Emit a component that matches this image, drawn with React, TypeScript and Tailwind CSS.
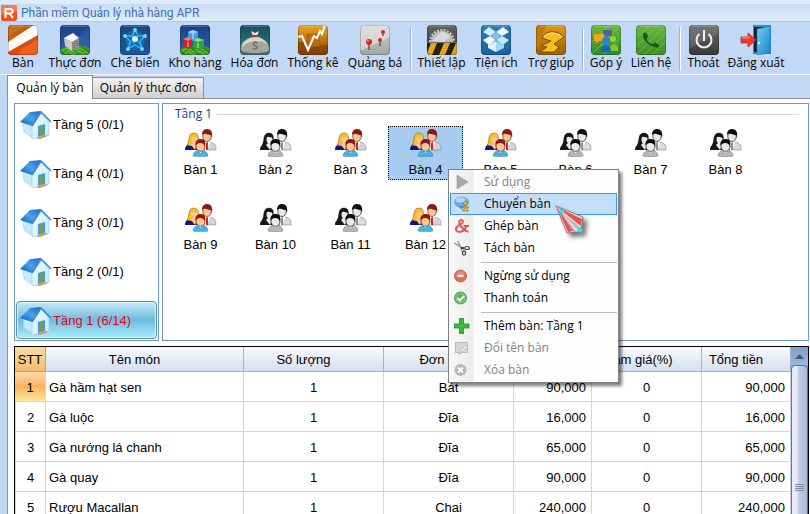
import { ReactNode } from "react";

const UI_FONT = "font-['Open_Sans','Noto_Sans',sans-serif]";
const GRID_FONT = "font-['Liberation_Sans',Arial,sans-serif]";

/* ---------- toolbar icons ---------- */

function IconFrame({ id, from, to, children }: { id: string; from: string; to: string; children: ReactNode }) {
  return (
    <svg width="30" height="30" viewBox="0 0 30 30" aria-hidden="true">
      <defs>
        <linearGradient id={`bg-${id}`} x1="0" y1="0" x2="0" y2="1">
          <stop offset="0" stopColor={from} />
          <stop offset="1" stopColor={to} />
        </linearGradient>
        <clipPath id={`clip-${id}`}>
          <rect width="30" height="30" rx="4" />
        </clipPath>
      </defs>
      <g clipPath={`url(#clip-${id})`}>
        <rect width="30" height="30" fill={`url(#bg-${id})`} />
        {children}
      </g>
      <rect x=".5" y=".5" width="29" height="29" rx="3.5" fill="none" stroke="#000" strokeOpacity=".2" />
      <path d="M3 1h24" stroke="#fff" strokeOpacity=".35" />
    </svg>
  );
}

const Grass = () => (
  <>
    <path d="M0 24L8 21H23L30 23V30H0Z" fill="#3c9a22" />
    <path d="M0 27l7-4 6 4 7-4 8 5M4 30l4-4 5 4 6-4 6 4" stroke="#6ccb3c" fill="none" />
    <path d="M0 25l5 5M12 22l6 8M22 22l7 5" stroke="#1f6d18" fill="none" />
  </>
);

const TableIcon = () => (
  <IconFrame id="table" from="#b86114" to="#ef5a10">
    <path d="M0 0H18L0 12Z" fill="#c8701c" />
    <path d="M0 27L30 10V30H0Z" fill="#f0601a" />
    <path d="M0 30V27L30 10V14L14 24L10 30Z" fill="#dd4a0e" />
    <path d="M0 17L26 0H30V10L0 27Z" fill="#fdf9f4" />
  </IconFrame>
);

const MenuIcon = () => (
  <IconFrame id="menu" from="#1c3f86" to="#2c63ae">
    <path d="M0 30L30 0V30Z" fill="#3b76c0" opacity=".3" />
    <Grass />
    <path d="M4 13L13 8L19 13L12 17Z" fill="#fafafa" />
    <path d="M4 13L12 17V26L5 21Z" fill="#c9c9c4" />
    <path d="M12 17L19 13V23L12 26Z" fill="#91928d" />
    <path d="M14 18v6M17 16v6" stroke="#4e4f4b" strokeDasharray="1 1" />
  </IconFrame>
);

const CookIcon = () => (
  <IconFrame id="cook" from="#1d4580" to="#1c559c">
    <circle cx="15" cy="15" r="10" fill="#1a86cf" opacity=".45" />
    <g fill="none" stroke="#37b8f0" strokeWidth="1.2">
      <path d="M15 5L18 11L25 11L20 16L22 24L15 20L8 24L10 16L5 11L12 11Z" />
      <path d="M5 11Q16 8 22 24M25 11Q14 8 8 24M15 5Q11 14 15 20" opacity=".7" />
    </g>
    <g fill="#5fdcff">
      <circle cx="15" cy="5" r="2" />
      <circle cx="5" cy="11" r="2" />
      <circle cx="25" cy="11" r="2" />
      <circle cx="8" cy="24" r="2" />
      <circle cx="22" cy="24" r="2" />
    </g>
    <circle cx="15" cy="14" r="3" fill="#c9f6ff" />
  </IconFrame>
);

const StockIcon = () => (
  <IconFrame id="stock" from="#1c3f86" to="#2c63ae">
    <Grass />
    <path d="M8 7L13 5L18 7V14L13 16L8 14Z" fill="#3f9be8" />
    <path d="M8 7L13 5L18 7L13 9Z" fill="#9dd3fa" />
    <path d="M3 14L8 12L12 14V22L8 24L3 22Z" fill="#d21f24" />
    <path d="M3 14L8 12L12 14L8 16Z" fill="#f1797a" />
    <path d="M13 15L18 13L24 15V22L18 25L13 22Z" fill="#2aa33a" />
    <path d="M13 15L18 13L24 15L18 17Z" fill="#88df7c" />
    <path d="M13 9v5M8 17v5M18 18v5" stroke="#fff" strokeOpacity=".8" />
  </IconFrame>
);

const BillIcon = () => (
  <IconFrame id="bill" from="#14505c" to="#3d7b7c">
    <path d="M11 6L15 8L19 6L17 11H13Z" fill="#e9e4dc" />
    <path d="M12 11H18" stroke="#c22c2c" strokeWidth="2" />
    <path d="M12 12C4 14 0 19 1 25C2 29 28 29 29 25C30 19 25 14 18 12Z" fill="#a9a59c" />
    <path d="M11 13C5 15 2 19 2 22C8 15 20 14 27 19C25 15 21 13 18 12Z" fill="#d8d5cd" />
    <path d="M17 18c-2-2-5 0-3 2s4 1 3 3-4 1-4 0" fill="none" stroke="#6b675e" strokeWidth="1.2" />
  </IconFrame>
);

const StatsIcon = () => (
  <IconFrame id="stats" from="#f2a11d" to="#8a4708">
    <path d="M0 17H12L17 20H30V30H0Z" fill="#7c3c06" opacity=".6" />
    <path d="M10 10h10v10H10z" fill="none" stroke="#b8640d" strokeWidth="3" />
    <path d="M0 12L4 11L10 25L16 11L19 13L22 6L24 9L27 0" fill="none" stroke="#fff" strokeWidth="2" />
  </IconFrame>
);

const PromoIcon = () => (
  <IconFrame id="promo" from="#d4d4d4" to="#a3a3a3">
    <path d="M0 0H30V12L0 26Z" fill="#e3e3e3" opacity=".7" />
    <path d="M9 18v7M20 17v4M23 8v3" stroke="#565656" strokeWidth="1.4" />
    <circle cx="9" cy="17" r="3" fill="#d5281e" />
    <circle cx="20" cy="15" r="2" fill="#d5281e" />
    <circle cx="23" cy="7" r="2" fill="#d5281e" />
    <circle cx="8" cy="16" r="1" fill="#ff9a8c" />
  </IconFrame>
);

const SetupIcon = () => (
  <IconFrame id="setup" from="#626262" to="#3c3c3c">
    <circle cx="15" cy="17" r="12" fill="none" stroke="#d2d2d2" strokeWidth="2" strokeDasharray="2 1.4" />
    <circle cx="15" cy="17" r="11" fill="#bdbdbd" />
    <path d="M5 16L15 6L24 11L17 17Z" fill="#d8d8d8" />
    <rect y="17" width="30" height="13" fill="#232323" />
    <path d="M4 18H10L5 30H0V28ZM17 18H23L18 30H12ZM29 18H30V30H24Z" fill="#eaa61b" />
    <path d="M0 17.5H30" stroke="#6b6b6b" />
  </IconFrame>
);

const ToolsIcon = () => (
  <IconFrame id="tools" from="#2f7cb2" to="#1d5f9a">
    <path d="M8 2L15 7L9 11L2 7Z" fill="#cdeffb" />
    <path d="M22 2L28 7L21 11L15 7Z" fill="#eefaff" />
    <path d="M2 15L9 11L15 15L8 20Z" fill="#eefaff" />
    <path d="M21 11L28 15L22 20L15 15Z" fill="#c3e8f8" />
    <path d="M9 11L15 7L21 11L15 15Z" fill="#7dc0e2" />
    <path d="M7 20L15 16V27L7 23Z" fill="#dcf3fc" />
    <path d="M15 16L23 20V23L15 27Z" fill="#a5d9f1" />
  </IconFrame>
);

const HelpIcon = () => (
  <IconFrame id="help" from="#e8960f" to="#9a6006">
    <path d="M0 0H10L3 20L0 22Z" fill="#c47908" />
    <path
      d="M6 13C9 6 20 4 28 12L18 19L23 22L18 27H4L11 22L5 21L15 16Z"
      fill="#f3c01b"
      stroke="#6f4403"
      strokeWidth=".9"
    />
    <path d="M8 12C12 7 20 7 25 11" fill="none" stroke="#ffe984" />
  </IconFrame>
);

const FeedbackIcon = () => (
  <IconFrame id="feedback" from="#6cb83a" to="#2f8a2a">
    <path d="M0 30L30 0M-6 24L24-6M6 36L36 6" stroke="#8ed05a" strokeOpacity=".6" />
    <path d="M12 5H21V11H17L15 13V11H12Z" fill="#5e5aa4" />
    <circle cx="22" cy="14" r="3" fill="#97d830" />
    <path d="M18 26C18 18 27 17 27 23V26Z" fill="#84c926" />
    <path d="M3 9H13V16H8L5 19V16H3Z" fill="#f7a21b" />
    <circle cx="15" cy="16" r="4" fill="#2a86dc" />
    <path d="M10 27C10 18 20 18 20 27Z" fill="#1767c0" />
  </IconFrame>
);

const ContactIcon = () => (
  <IconFrame id="contact" from="#6ab83e" to="#3c8f2a">
    <path d="M0 30L30 0M-8 22L22-8M8 38L38 8M-4 26L26-4M4 34L34 4" stroke="#8ccd5a" strokeOpacity=".5" />
    <path
      d="M7 9C8 7 10 7 11 9L12 11C12 13 10 13 11 15C12 17 14 19 16 19C18 19 18 17 20 18L23 20C23 22 22 23 19 22C13 21 6 15 7 9Z"
      fill="#1e571a"
    />
  </IconFrame>
);

const ExitIcon = () => (
  <IconFrame id="exit" from="#6a6a6a" to="#383838">
    <path d="M0 0H30V8L0 24Z" fill="#8a8a8a" opacity=".35" />
    <path d="M10.500 9A7.500 7.500 0 1 0 19.500 9" fill="none" stroke="#f2f2f2" strokeWidth="2" />
    <path d="M15 5V16" stroke="#f2f2f2" strokeWidth="2" />
  </IconFrame>
);

const LogoutIcon = () => (
  <svg width="32" height="30" viewBox="0 0 32 30" aria-hidden="true">
    <defs>
      <linearGradient id="door" x1="0" y1="0" x2="1" y2="1">
        <stop offset="0" stopColor="#7ccdf6" />
        <stop offset="1" stopColor="#1584cc" />
      </linearGradient>
    </defs>
    <path d="M13 0H31V29H13Z" fill="#2a8fd0" />
    <path d="M14 2H24V27H14Z" fill="#0e2438" />
    <path d="M17 4L30 1V28L17 30Z" fill="url(#door)" stroke="#2577b0" strokeWidth=".6" />
    <circle cx="19" cy="18" r="1.200" fill="#e9f7ff" />
    <path d="M1 12H8V8L16 15L8 22V18H1Z" fill="#ec3b30" stroke="#b81d18" strokeWidth=".7" />
    <path d="M2 13H9V11" fill="none" stroke="#ff9d92" />
  </svg>
);

/* ---------- content icons ---------- */

const AppLogo = () => (
  <svg width="16" height="16" viewBox="0 0 16 16" aria-hidden="true">
    <rect width="16" height="16" rx="2" fill="#f0501c" />
    <path d="M2 0H14A2 2 0 0 1 16 2V6L0 10V2A2 2 0 0 1 2 0Z" fill="#f67c48" />
    <path d="M4.500 13V4H9C12.500 4 12.500 8.500 9 8.500H5M8.500 8.500L12 13" fill="none" stroke="#fff" strokeWidth="2" />
  </svg>
);

const HouseIcon = () => (
  <svg width="32" height="30" viewBox="0 0 32 30" aria-hidden="true">
    <defs>
      <linearGradient id="roof" x1="1" y1="0" x2="0" y2="1">
        <stop offset="0" stopColor="#1a66c0" />
        <stop offset=".5" stopColor="#4aa2f0" />
        <stop offset="1" stopColor="#0e57b4" />
      </linearGradient>
      <linearGradient id="wall" x1="0" y1="0" x2="1" y2="1">
        <stop offset="0" stopColor="#f2fdff" />
        <stop offset="1" stopColor="#bfe9fb" />
      </linearGradient>
    </defs>
    <path d="M3 12L13 15V28L4 22Z" fill="#c2ecfb" stroke="#a9c3d6" strokeWidth=".6" />
    <path d="M12 15L21 3L29 12V25L15 29L12 28Z" fill="url(#wall)" stroke="#a9c3d6" strokeWidth=".6" />
    <path d="M0 12L10 2L21 1L12 16Z" fill="url(#roof)" />
    <path d="M12 16L21 2L31 12" fill="none" stroke="#3d86d2" strokeWidth="1.600" />
    <path d="M18 16L25 14V25L18 27Z" fill="#3f9ae6" />
    <path d="M20 17L23 16V25L20 26Z" fill="#7f9a4a" />
    <path d="M16 28L25 25L28 26L20 29Z" fill="#d9906c" />
  </svg>
);

function PeopleIcon({ busy }: { busy: boolean }) {
  const c = busy
    ? { skin: "#fbc78f", blonde: "#f7bf1e", hair: "#8c1a12", woman: "#12128e", man: "#cfd2e0", tie: "#e01e1e", kid: "#39b5f2", edge: "#5b2c14" }
    : { skin: "#e9e9e9", blonde: "#161616", hair: "#0d0d0d", woman: "#161616", man: "#dcdcdc", tie: "#8d8d8d", kid: "#b5b5b5", edge: "#1b1b1b" };
  return (
    <svg width="32" height="28" viewBox="0 0 32 28" aria-hidden="true">
      <path d="M16 21C16 15 19 13 23 13C28 13 31 15 31 19V21Z" fill={c.man} stroke={c.edge} strokeOpacity=".5" strokeWidth=".6" />
      <path d="M19 13L24 11L25 14L22 21H20Z" fill="#fff" />
      <path d="M21 14L23 13L23 21H21Z" fill={c.tie} />
      <ellipse cx="22" cy="7.500" rx="4.200" ry="5" fill={c.skin} stroke={c.edge} strokeWidth=".7" />
      <path d="M17 6C17 2 19 0 22 0C26 0 28 3 27 9L26 6C23 6 20 3 17 6Z" fill={c.hair} />
      <path d="M0 21C0 16 3 15 7 15C11 15 13 17 13 20V21Z" fill={c.woman} />
      <path d="M2 16C5 13 2 4 9 4C14 4 14 9 13 14L10 17H5Z" fill={c.blonde} stroke={c.edge} strokeWidth=".4" />
      <path d="M6 16L10 21L12 16L9 13Z" fill={c.skin} />
      <ellipse cx="9.500" cy="10.500" rx="3" ry="4" fill={c.skin} />
      <path d="M5 11C6 6 10 8 13 9L13 7L10 5L6 7Z" fill={c.blonde} />
      <path d="M8 27C8 23 12 21 15 21C19 21 23 23 23 27L21 27.500H10Z" fill={c.kid} stroke={c.edge} strokeOpacity=".5" strokeWidth=".5" />
      <path d="M13 21L15.500 24L18 21Z" fill="#fff" />
      <ellipse cx="15.500" cy="17.500" rx="4.500" ry="4.800" fill={c.skin} stroke={c.edge} strokeWidth=".7" />
      <path d="M10.500 17C10 12 12 10 16 10C20 10 21 13 20 18C19 15 18 14 15 14C13 14 11 15 10.500 17Z" fill={c.hair} />
    </svg>
  );
}

const menuIcons = {
  play: <path d="M3 1L14 8L3 15Z" fill="#a9a9a9" stroke="#989898" strokeWidth=".6" />,
  move: (
    <>
      <ellipse cx="7.500" cy="6" rx="7.500" ry="5.500" fill="#68a9ee" />
      <ellipse cx="6.500" cy="4" rx="5" ry="2.500" fill="#b4d7fb" />
      <path d="M4 10L9 10L8 14Z" fill="#4b8fdc" />
      <circle cx="11.500" cy="7.500" r="2" fill="#f5c02f" stroke="#8d6510" strokeWidth=".7" />
      <path d="M8 11L15 11L12.800 12.500L14.500 15H8.500L10.500 12.500Z" fill="#f5c02f" stroke="#8d6510" strokeWidth=".7" />
    </>
  ),
  merge: (
    <path
      d="M14.500 14C10 13 4 6 5.500 3C7 0.500 10.500 3 8 5.500C4 8 1 9 2 12C4 15.500 11 14 12 8M9.500 8H15"
      fill="none"
      stroke="#dc5a5c"
      strokeWidth="2"
    />
  ),
  split: (
    <>
      <path d="M0 3L10 9M4 1L8 11" stroke="#9b9b9b" strokeWidth="1.500" />
      <path d="M7 8L10 8" stroke="#444" strokeWidth="2" />
      <ellipse cx="13" cy="8" rx="2.300" ry="1.500" fill="none" stroke="#4a4a4a" strokeWidth="1.200" />
      <ellipse cx="10" cy="13" rx="1.500" ry="2.200" fill="none" stroke="#4a4a4a" strokeWidth="1.200" />
    </>
  ),
  stop: (
    <>
      <circle cx="6.500" cy="8" r="6" fill="#e2675c" stroke="#c65047" strokeWidth=".8" />
      <path d="M2 7C3 2 10 2 11 7Z" fill="#f3938a" opacity=".7" />
      <path d="M3.500 8H9.500" stroke="#fff" strokeWidth="2.200" />
    </>
  ),
  pay: (
    <>
      <circle cx="6.500" cy="8" r="6" fill="#5ab256" stroke="#3f9544" strokeWidth=".8" />
      <circle cx="6.500" cy="8" r="4.600" fill="none" stroke="#a5dc9d" strokeWidth=".8" />
      <path d="M3.500 8L6 10.500L10 6" fill="none" stroke="#fff" strokeWidth="2" />
    </>
  ),
  add: (
    <path d="M5.500 .5H9.500V6H15V10H9.500V15.500H5.500V10H0V6H5.500Z" fill="#3cb83c" stroke="#1d8f25" strokeWidth=".8" />
  ),
  rename: (
    <>
      <path d="M1.500 2.500H13.500V12.500H8L5 14.500V12.500H1.500Z" fill="#d6d6d6" stroke="#b8b8b8" />
      <path d="M6 11L12 5L14 7L8 12Z" fill="#eee" stroke="#b0b0b0" strokeWidth=".6" />
    </>
  ),
  remove: (
    <>
      <circle cx="6.500" cy="8" r="6" fill="#b6b6b6" />
      <path d="M4 5.500L9 10.500M9 5.500L4 10.500" stroke="#fff" strokeWidth="2" />
    </>
  ),
};

/* ---------- data ---------- */

type Tool = { label: string; icon: ReactNode; width: string };

const toolGroups: Tool[][] = [
  [
    { label: "Bàn", icon: <TableIcon />, width: "w-[42px]" },
    { label: "Thực đơn", icon: <MenuIcon />, width: "w-[62px]" },
    { label: "Chế biến", icon: <CookIcon />, width: "w-[58px]" },
    { label: "Kho hàng", icon: <StockIcon />, width: "w-[62px]" },
    { label: "Hóa đơn", icon: <BillIcon />, width: "w-[57px]" },
    { label: "Thống kê", icon: <StatsIcon />, width: "w-[60px]" },
    { label: "Quảng bá", icon: <PromoIcon />, width: "w-[64px]" },
  ],
  [
    { label: "Thiết lập", icon: <SetupIcon />, width: "w-[55px]" },
    { label: "Tiện ích", icon: <ToolsIcon />, width: "w-[54px]" },
    { label: "Trợ giúp", icon: <HelpIcon />, width: "w-[56px]" },
  ],
  [
    { label: "Góp ý", icon: <FeedbackIcon />, width: "w-[40px]" },
    { label: "Liên hệ", icon: <ContactIcon />, width: "w-[50px]" },
  ],
  [
    { label: "Thoát", icon: <ExitIcon />, width: "w-[41px]" },
    { label: "Đăng xuất", icon: <LogoutIcon />, width: "w-[64px]" },
  ],
];

const floors = [
  { name: "Tầng 5", used: "(0/1)" },
  { name: "Tầng 4", used: "(0/1)" },
  { name: "Tầng 3", used: "(0/1)" },
  { name: "Tầng 2", used: "(0/1)" },
  { name: "Tầng 1", used: "(6/14)", active: true },
];

const busyTables = [1, 3, 4, 5, 9, 12];
const tables = Array.from({ length: 12 }, (_, i) => i + 1);

type MenuEntry = { label: string; icon: keyof typeof menuIcons; disabled?: boolean; active?: boolean };

const menuGroups: MenuEntry[][] = [
  [
    { label: "Sử dụng", icon: "play", disabled: true },
    { label: "Chuyển bàn", icon: "move", active: true },
    { label: "Ghép bàn", icon: "merge" },
    { label: "Tách bàn", icon: "split" },
  ],
  [
    { label: "Ngừng sử dụng", icon: "stop" },
    { label: "Thanh toán", icon: "pay" },
  ],
  [
    { label: "Thêm bàn: Tầng 1", icon: "add" },
    { label: "Đổi tên bàn", icon: "rename", disabled: true },
    { label: "Xóa bàn", icon: "remove", disabled: true },
  ],
];

const orders = [
  ["Gà hầm hạt sen", "1", "Bát", "90,000", "0", "90,000"],
  ["Gà luộc", "1", "Đĩa", "16,000", "0", "16,000"],
  ["Gà nướng lá chanh", "1", "Đĩa", "65,000", "0", "65,000"],
  ["Gà quay", "1", "Đĩa", "90,000", "0", "90,000"],
  ["Rượu Macallan", "1", "Chai", "240,000", "0", "240,000"],
];

/* ---------- sections ---------- */

function TitleBar() {
  return (
    <header className="flex h-[22px] shrink-0 items-center gap-1 border-t-4 border-b border-t-[#deebf9] border-b-[#a8cdf0] bg-linear-to-b from-[#cadcf4] to-[#e0edfc] pl-px">
      <AppLogo />
      <h1 className="font-[Roboto,sans-serif] text-[12px] leading-4 text-[#4070b8]">Phần mềm Quản lý nhà hàng APR</h1>
    </header>
  );
}

function Toolbar() {
  return (
    <nav className="flex h-[53px] shrink-0 border-b border-[#f4f8fe] pl-[2px]">
      {toolGroups.map((group, i) => (
        <div key={i} className="flex">
          {i > 0 && (
            <div className="flex w-[7px] justify-center pt-[5px] pb-[3px]">
              <div className="w-[2px] border-l border-[#9fb3d0] bg-white" />
            </div>
          )}
          {group.map((tool) => (
            <button key={tool.label} type="button" className={`flex flex-col items-center pt-[3px] ${tool.width}`}>
              {tool.icon}
              <span className="text-[12px] leading-4 whitespace-nowrap">{tool.label}</span>
            </button>
          ))}
        </div>
      ))}
    </nav>
  );
}

function Tabs() {
  return (
    <div role="tablist" className="ml-[7px] flex h-6 shrink-0 items-end border-b border-[#8c93a3]">
      <button
        type="button"
        role="tab"
        aria-selected="true"
        className="-mb-px h-6 w-[86px] border border-b-0 border-[#8c8e94] bg-white text-[12px] leading-5 whitespace-nowrap"
      >
        Quản lý bàn
      </button>
      <button
        type="button"
        role="tab"
        aria-selected="false"
        className="h-[21px] w-[111px] border border-b-0 border-l-0 border-[#8c8e94] bg-linear-to-b from-[#f2f2f2] to-[#d0d0d0] text-[12px] leading-5 whitespace-nowrap"
      >
        Quản lý thực đơn
      </button>
    </div>
  );
}

function FloorList() {
  return (
    <ul className={`flex w-[145px] shrink-0 flex-col gap-[11px] border border-[#6f9dcb] px-px pt-px text-[13px] ${GRID_FONT}`}>
      {floors.map((floor) => (
        <li key={floor.name}>
          <button
            type="button"
            className={`flex h-[38px] w-full items-center gap-px rounded-sm border pt-[2px] pl-[3px] ${
              floor.active
                ? "border-[#5e8fb0] bg-linear-to-b from-[#c4e9f6] via-[#6cbce2] to-[#a8effa] text-[#f00010] inset-ring inset-ring-[#d4f2fb]"
                : "border-transparent"
            }`}
          >
            <HouseIcon />
            <span className="whitespace-nowrap">
              {floor.name} {floor.used}
            </span>
          </button>
        </li>
      ))}
    </ul>
  );
}

function TableGroup() {
  return (
    <section className="min-w-0 flex-1 border border-[#6b97d0]">
      <div className="flex h-[22px] items-center gap-1 pr-[9px] pb-[2px] pl-3">
        <h2 className="text-[12px] leading-4 whitespace-nowrap text-[#143c9c]">Tầng 1</h2>
        <div className="h-px flex-1 bg-[#d6dcec]" />
      </div>
      <div className={`flex flex-wrap gap-y-[21px] text-[13px] leading-4 ${GRID_FONT}`}>
        {tables.map((n) => (
          <button
            key={n}
            type="button"
            className={`flex h-[54px] w-[75px] flex-col items-center gap-[5px] border border-dotted pt-[2px] ${
              n === 4 ? "border-black bg-[#a7ccef]" : "border-transparent"
            }`}
          >
            <PeopleIcon busy={busyTables.includes(n)} />
            <span>Bàn {n}</span>
          </button>
        ))}
      </div>
    </section>
  );
}

const headCell = "border-r border-b border-[#9db4d2] bg-linear-to-b from-[#f8fafd] to-[#d5dfee] pt-px pr-5 font-normal";
const cell = "border-r border-b border-[#d0d5e2] pt-[2px]";

function OrderTable() {
  return (
    <section className={`flex min-h-0 flex-1 overflow-hidden border border-b-0 border-black text-[13px] leading-4 ${GRID_FONT}`}>
      <table className="h-max flex-1 table-fixed border-separate border-spacing-0">
        <colgroup>
          <col className="w-[31px]" />
          <col />
          <col className="w-[140px]" />
          <col className="w-[130px]" />
          <col className="w-[78px]" />
          <col className="w-[110px]" />
          <col className="w-[89px]" />
        </colgroup>
        <thead>
          <tr className="h-[25px]">
            <th className="border-r border-b border-[#f09436] bg-linear-to-b from-[#f9dca0] to-[#f0be6c] pt-px font-normal">STT</th>
            <th className={headCell}>Tên món</th>
            <th className={headCell}>Số lượng</th>
            <th className={headCell}>Đơn vị</th>
            <th className={headCell}>Đơn giá</th>
            <th className={headCell}>Giảm giá(%)</th>
            <th className={headCell}>Tổng tiền</th>
          </tr>
        </thead>
        <tbody>
          {orders.map(([name, qty, unit, price, discount, total], i) => (
            <tr key={name} className="h-[30px]">
              <td
                className={`text-center ${cell} ${
                  i === 0 ? "bg-linear-to-b from-[#fbdcae] via-[#fbb25a] to-[#fdea9c]" : "border-l"
                }`}
              >
                {i + 1}
              </td>
              <td className={`pl-[3px] ${cell}`}>{name}</td>
              <td className={`text-center ${cell}`}>{qty}</td>
              <td className={`text-center ${cell}`}>{unit}</td>
              <td className={`pr-[5px] text-right ${cell}`}>{price}</td>
              <td className={`text-center ${cell}`}>{discount}</td>
              <td className={`pr-[5px] text-right ${cell}`}>{total}</td>
            </tr>
          ))}
        </tbody>
      </table>
      <div className="flex w-[17px] shrink-0 flex-col bg-[#86a5ce]">
        <button
          type="button"
          aria-label="Cuộn lên"
          className="flex h-[18px] shrink-0 items-center justify-center bg-linear-to-b from-[#7f9fca] to-[#9ab8dc]"
        >
          <svg width="9" height="5" viewBox="0 0 9 5" aria-hidden="true">
            <path d="M4.500 0L9 5H0Z" fill="#44597c" />
          </svg>
        </button>
        <div className="flex h-[244px] shrink-0 flex-col items-center justify-center gap-px rounded-sm border border-[#5674a6] bg-linear-to-r from-[#e6ebf5] from-35% via-[#c4d1e5] via-40% to-[#a4bcdc]">
          <span className="h-px w-[9px] bg-[#7d8ca4]" />
          <span className="h-px w-[9px] bg-[#7d8ca4]" />
          <span className="h-px w-[9px] bg-[#7d8ca4]" />
          <span className="h-px w-[9px] bg-[#7d8ca4]" />
        </div>
      </div>
    </section>
  );
}

function ContextMenu() {
  return (
    <div
      role="menu"
      className="absolute top-[169px] left-[448px] w-[171px] border border-[#808080] bg-linear-to-r from-[#f8f8f8] from-0% via-[#ececec] via-[24px] to-[#fdfdfd] to-[25px] p-px shadow-[3px_3px_3px_rgba(0,0,0,0.5)]"
    >
      {menuGroups.map((group, i) => (
        <div key={i}>
          {i > 0 && (
            <div className="flex h-[6px] items-center pl-[31px]">
              <div className="h-px flex-1 bg-[#bdbdbd]" />
            </div>
          )}
          {group.map((entry) => (
            <button
              key={entry.label}
              type="button"
              role="menuitem"
              disabled={entry.disabled}
              className={`flex h-[22px] w-full items-center gap-[14px] border pl-[3px] text-[12px] leading-4 whitespace-nowrap ${
                entry.active ? "border-[#3399ff] bg-[#c3dffd]" : "border-transparent"
              } ${entry.disabled ? "text-[#838383]" : "text-black"}`}
            >
              <svg width="16" height="16" viewBox="0 0 16 16" aria-hidden="true">
                {menuIcons[entry.icon]}
              </svg>
              {entry.label}
            </button>
          ))}
        </div>
      ))}
    </div>
  );
}

function Pointer() {
  return (
    <svg
      className="pointer-events-none absolute top-[205px] left-[555px] drop-shadow-[4px_4px_2px_rgba(0,0,0,0.5)]"
      width="30"
      height="34"
      viewBox="0 0 30 34"
      aria-hidden="true"
    >
      <path d="M1 1L28 12L27 21L23 27L12 28Z" fill="#e4dede" stroke="#7d7272" strokeWidth=".9" />
      <path d="M2 2L27 14L26 21Z" fill="#e85052" />
      <path d="M2 2L18 26L13 27Z" fill="#e85052" />
      <path d="M5 6L25 22L23 25Z" fill="#c3b7b7" />
      <path d="M5 6L21 27L19 27Z" fill="#a89c9c" />
      <circle cx="7" cy="7" r="2.200" fill="#25e4ee" />
      <circle cx="25" cy="25" r="2.500" fill="#25e4ee" />
    </svg>
  );
}

export default function App() {
  return (
    <div className={`relative flex h-screen flex-col overflow-hidden bg-[#c2d8f7] text-black ${UI_FONT}`}>
      <TitleBar />
      <Toolbar />
      <Tabs />
      <main className="ml-[7px] flex min-h-0 flex-1 flex-col gap-[5px] border-l border-[#8c93a3] bg-white pt-1 pr-px pl-[6px]">
        <div className="flex h-[238px] shrink-0 gap-[3px]">
          <FloorList />
          <TableGroup />
        </div>
        <OrderTable />
      </main>
      <ContextMenu />
      <Pointer />
    </div>
  );
}
